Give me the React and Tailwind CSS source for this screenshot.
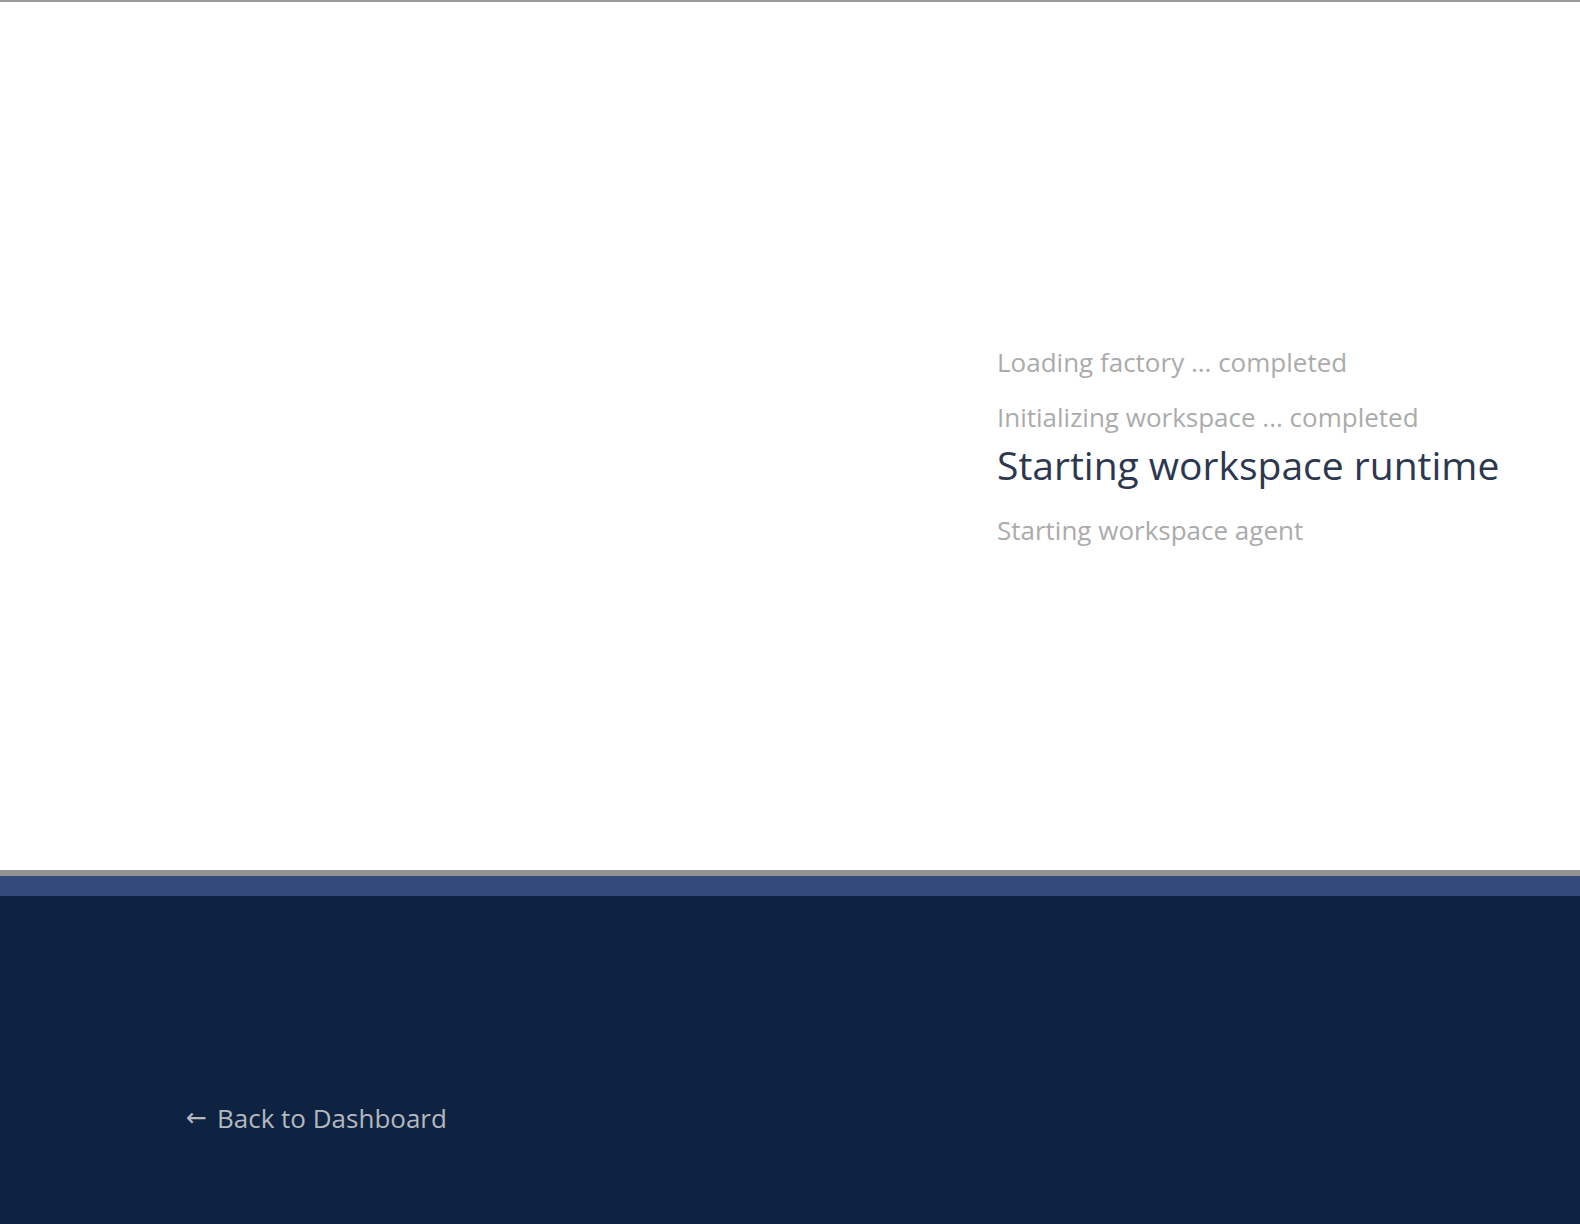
export default function App() {
  const steps = [
    { label: 'Loading factory ... completed', className: 'text-[26px] leading-[36px] text-[#ababab] mb-[19px]' },
    { label: 'Initializing workspace ... completed', className: 'text-[26px] leading-[36px] text-[#ababab] mb-[6px]' },
    { label: 'Starting workspace runtime', className: 'text-[39px] leading-[48px] text-[#2d3850] mb-[23px]' },
    { label: 'Starting workspace agent', className: 'text-[26px] leading-[36px] text-[#ababab]' },
  ];

  return (
    <div className="h-[1224px] w-full flex flex-col font-['Open_Sans',sans-serif]">
      {/* Loader area */}
      <div className="h-[870px] bg-white border-t-2 border-[#999999] flex">
        <div className="w-[997px] shrink-0" />
        <div className="pt-[342px] flex flex-col">
          {steps.map((step, i) => (
            <div key={i} className={`whitespace-nowrap ${step.className}`}>
              {step.label}
            </div>
          ))}
        </div>
      </div>

      {/* Footer */}
      <div className="h-[6px] bg-[#939393]" />
      <div className="h-[20px] bg-[#334a7a]" />
      <div className="flex-1 bg-[#0e2241] flex items-start pl-[186px] pt-[205px]">
        <a href="#" className="text-[26px] leading-[34px] text-[#b4b8bf] flex items-center gap-[10px]">
          <span className="font-['DejaVu_Sans',sans-serif] text-[25px]">←</span>
          <span>Back to Dashboard</span>
        </a>
      </div>
    </div>
  );
}
